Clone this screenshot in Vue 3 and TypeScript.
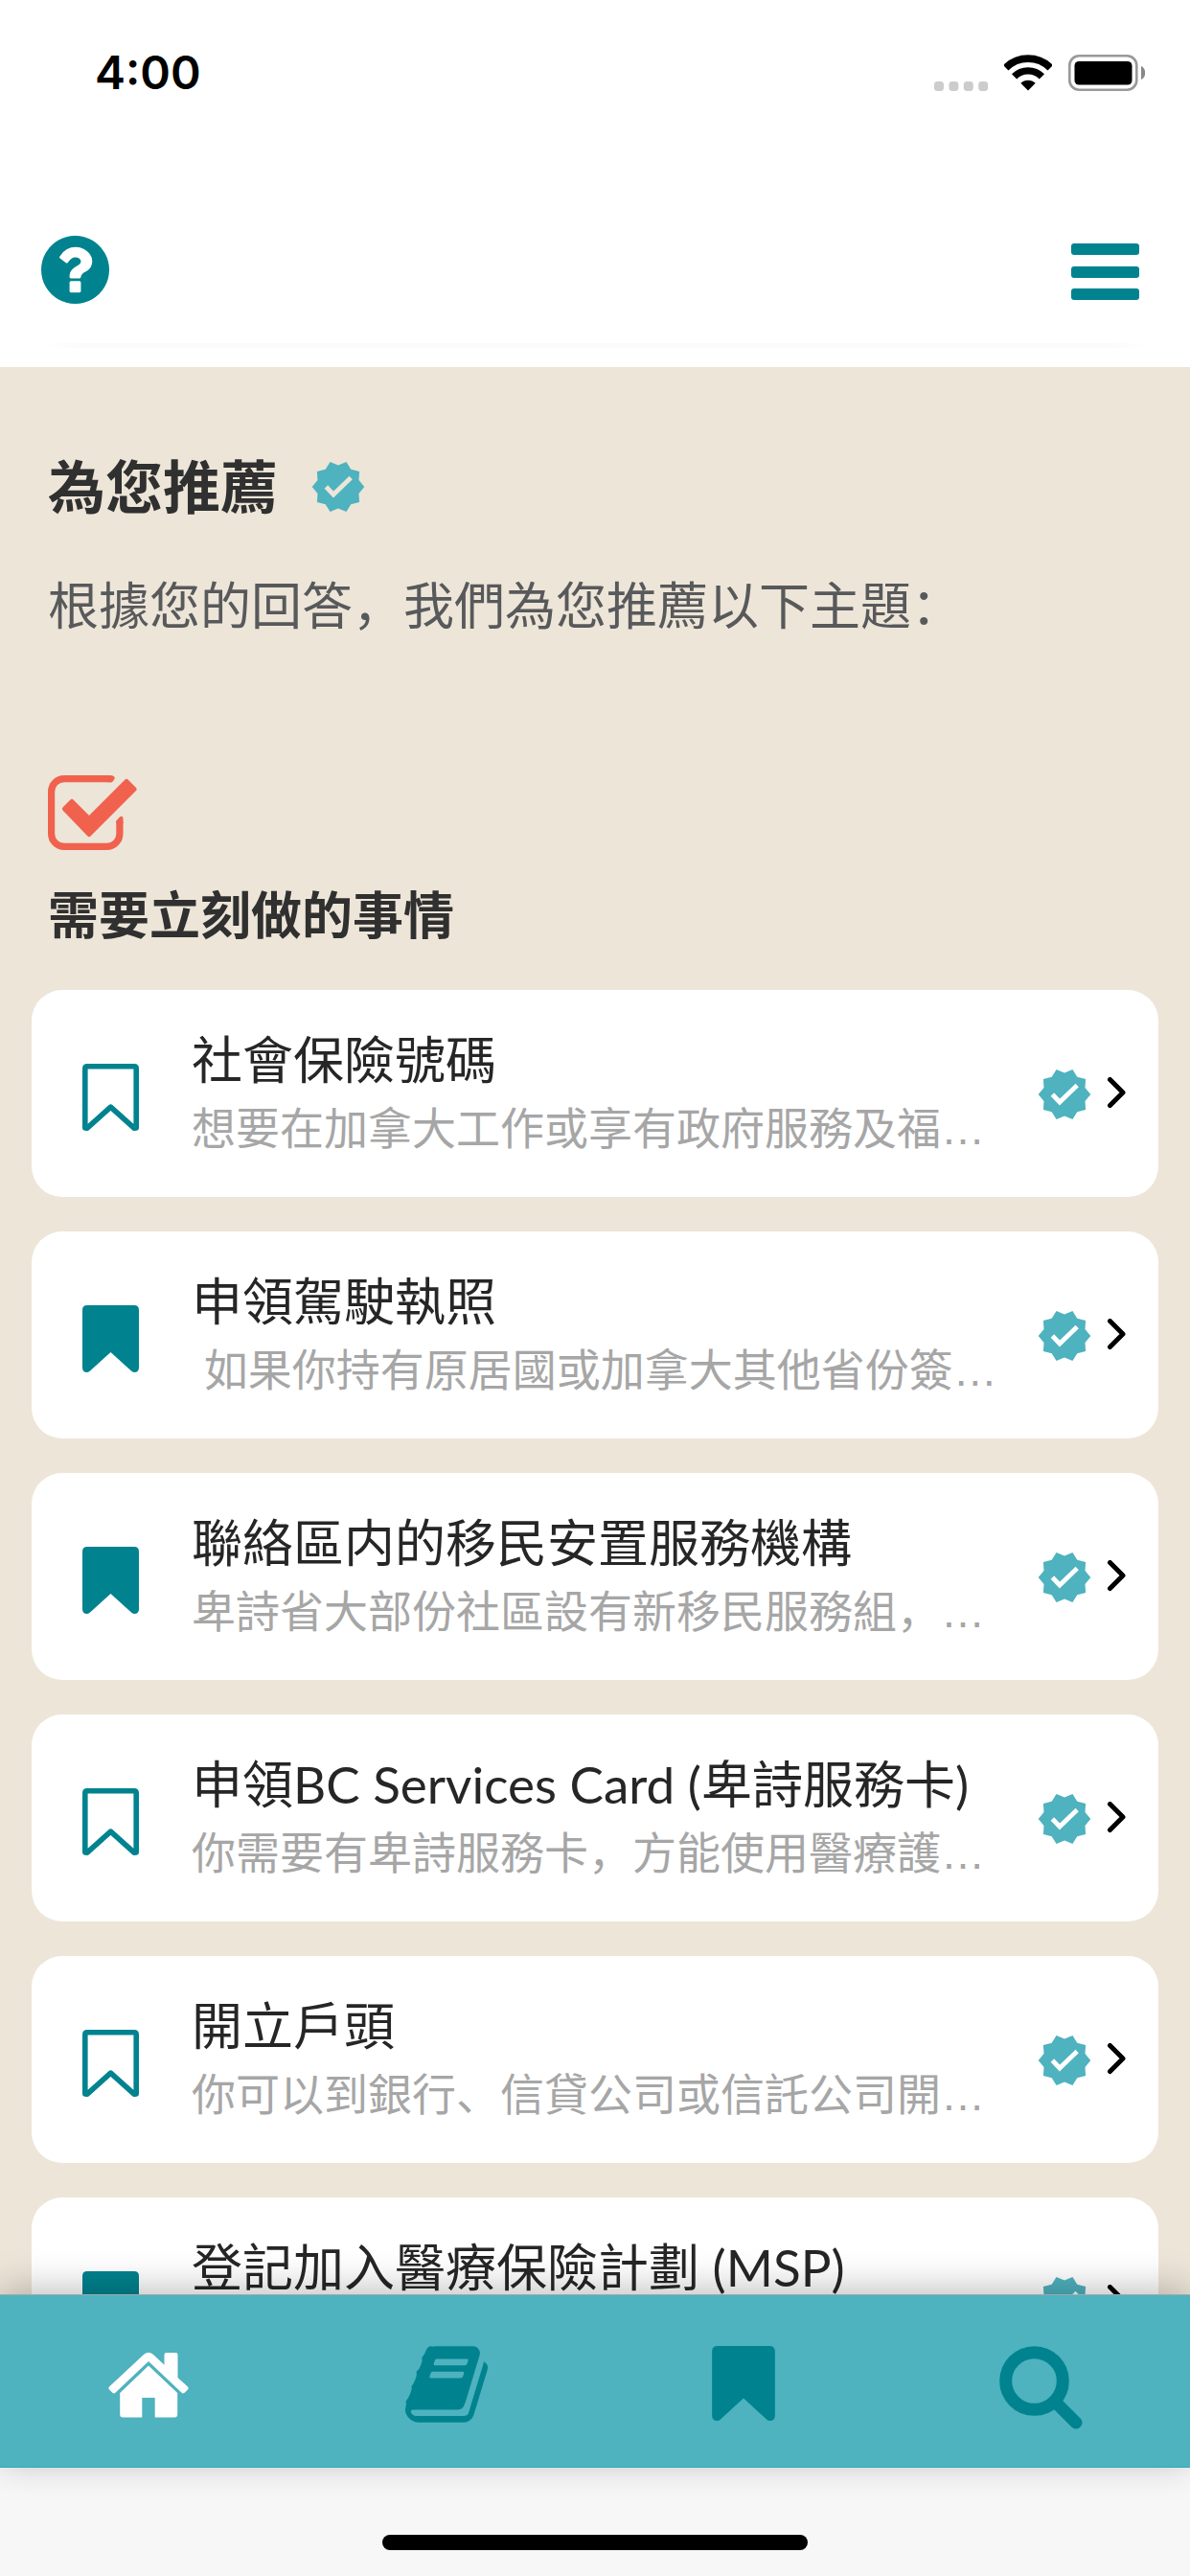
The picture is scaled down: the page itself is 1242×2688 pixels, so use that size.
<script setup lang="ts">
import { ref } from 'vue'

interface Topic {
  id: number
  title: string
  summary: string
  saved: boolean
}

const topics = ref<Topic[]>([
  { id: 1, title: '社會保險號碼', summary: '想要在加拿大工作或享有政府服務及福…', saved: false },
  { id: 2, title: '申領駕駛執照', summary: '\u00a0如果你持有原居國或加拿大其他省份簽…', saved: true },
  { id: 3, title: '聯絡區内的移民安置服務機構', summary: '卑詩省大部份社區設有新移民服務組，…', saved: true },
  { id: 4, title: '申領BC Services Card (卑詩服務卡)', summary: '你需要有卑詩服務卡，方能使用醫療護…', saved: false },
  { id: 5, title: '開立戶頭', summary: '你可以到銀行、信貸公司或信託公司開…', saved: false },
  { id: 6, title: '登記加入醫療保險計劃 (MSP)', summary: '', saved: true },
])

// Ten-pointed seal, alternating tips and valleys around (28, 28).
const seal = Array.from({ length: 20 }, (_, i) => {
  const radius = i % 2 === 0 ? 27.3 : 22.6
  const angle = (i * Math.PI) / 10
  return `${(28 + radius * Math.cos(angle)).toFixed(2)},${(28 + radius * Math.sin(angle)).toFixed(2)}`
}).join(' ')
</script>

<template>
  <div class="app" lang="zh-CN">
    <div class="status">
      <span class="time">4:00</span>
      <div class="indicators">
        <svg class="dots" viewBox="0 0 56 10" aria-hidden="true">
          <rect v-for="n in 4" :key="n" :x="(n - 1) * 15.4" width="10" height="10" rx="3.4" />
        </svg>
        <svg class="wifi" viewBox="0 0 50 38" aria-hidden="true">
          <path d="M1.7 13.7a33 33 0 0 1 46.6 0" stroke-width="7.8" />
          <path d="M10.6 22.8a20.4 20.4 0 0 1 28.8 0" stroke-width="7.4" />
          <path class="solid" d="M25 37.5 17.3 29.8a11 11 0 0 1 15.4 0z" />
        </svg>
        <svg class="battery" viewBox="0 0 80 38" aria-hidden="true">
          <rect x="1.3" y="1.3" width="70" height="35.4" rx="10" fill="none" stroke="#999" stroke-width="2.6" />
          <rect x="6.5" y="7" width="60" height="24.5" rx="4.6" />
          <path d="M76 12c5.600 2 5.600 12 0 14z" fill="#888" />
        </svg>
      </div>
    </div>

    <header class="header">
      <button type="button" aria-label="說明">
        <svg class="help" viewBox="128 128 1536 1536" aria-hidden="true">
          <path d="M1024 1376v-192q0-14-9-23t-23-9h-192q-14 0-23 9t-9 23v192q0 14 9 23t23 9h192q14 0 23-9t9-23zm256-672q0-88-55.500-163t-138.500-116-170-41q-243 0-371 213-15 24 8 42l132 100q7 6 19 6 16 0 25-12 53-68 86-92 34-24 86-24 48 0 85.500 26t37.500 59q0 38-20 61t-68 45q-63 28-115.500 86.500t-52.500 125.500v36q0 14 9 23t23 9h192q14 0 23-9t9-23q0-19 21.500-49.500t54.500-49.500q32-18 49-28.500t46-35 44.500-48 28-60.500 12.500-81zm384 192q0 209-103 385.500t-279.500 279.500-385.500 103-385.500-103-279.500-279.500-103-385.500 103-385.500 279.500-279.500 385.500-103 385.500 103 279.500 279.500 103 385.500z" />
        </svg>
      </button>
      <button type="button" aria-label="選單">
        <svg class="menu" viewBox="0 -4 71 64" aria-hidden="true">
          <rect width="71" height="12" rx="3" />
          <rect y="24" width="71" height="12" rx="3" />
          <rect y="47" width="71" height="12" rx="3" />
        </svg>
      </button>
    </header>

    <main class="content">
      <div class="intro">
        <h1>
          為您推薦
          <svg class="badge cut" viewBox="0 0 56 56" aria-hidden="true">
            <polygon :points="seal" />
            <polyline points="15.400,28 23,36 41.200,18.600" />
          </svg>
        </h1>
        <p>根據您的回答，我們為您推薦以下主題：</p>
      </div>

      <section>
        <div class="section-head">
          <svg class="task" viewBox="0 0 93 78" aria-hidden="true">
            <path class="box" d="M66 3.600H17A13.400 13.400 0 0 0 3.600 17V61A13.400 13.400 0 0 0 17 74.400H61.500A13.400 13.400 0 0 0 74.900 61V48" />
            <path d="M64 0Q71 0 69.500 4L67 7.200H62V0zM71.300 50V47.500L75 43.500Q78.500 41 78.500 46V50z" />
            <path class="tick" d="M17.500 35 25 27.500 43 45.500 82 6.500 90 14.500 43 61.500z" />
          </svg>
          <h2>需要立刻做的事情</h2>
        </div>

        <ul class="cards">
          <li v-for="topic in topics" :key="topic.id" class="card">
            <button
              type="button"
              class="save"
              :aria-pressed="topic.saved"
              aria-label="收藏"
              @click="topic.saved = !topic.saved"
            >
              <svg class="bookmark" viewBox="0 0 59 70" aria-hidden="true">
                <path v-if="topic.saved" d="M5 0H54Q59 0 59 5V65Q59 70 54 70 52.500 70 51 68.600L29.500 49 8 68.600Q6.500 70 5 70 0 70 0 65V5Q0 0 5 0z" />
                <path v-else class="outline" d="M5 2.800H54Q56.200 2.800 56.200 5V67L54 67.200 29.500 45.200 5 67.200 2.800 67V5Q2.800 2.800 5 2.800z" />
              </svg>
            </button>
            <a href="#" class="topic">
              <span class="text">
                <span class="title">{{ topic.title }}</span>
                <span class="summary">{{ topic.summary }}</span>
              </span>
              <svg class="badge" viewBox="0 0 56 56" aria-hidden="true">
                <polygon :points="seal" />
                <polyline points="15.400,28 23,36 41.200,18.600" />
              </svg>
              <svg class="chevron" viewBox="0 1 20 36" aria-hidden="true">
                <path d="M3.500 3.500 17 17 3.500 30.500" />
              </svg>
            </a>
          </li>
        </ul>
      </section>
    </main>

    <nav class="tabs">
      <a href="#" class="active" aria-label="首頁" aria-current="page">
        <svg width="84" height="88" viewBox="0 0 84 88" aria-hidden="true">
          <path d="M37.500 8.500Q42 5 46.500 8.500L58.500 19.800V9Q58.500 7 60.500 7H70.500Q72.500 7 72.500 9V33L83 42.500Q84.300 44 83 45.400L79.600 48.800Q78 50 76.600 48.800L42 16 7.400 48.800Q6 50 4.400 48.800L1 45.400Q-.3 44 1 42.500z" />
          <path d="M42 20.600 72.200 49V71.500Q72.200 74.500 69.200 74.500H48.700V54H35.300V74.500H15.200Q12.200 74.500 12.200 71.500V49z" />
        </svg>
      </a>
      <a href="#" aria-label="主題">
        <svg width="86" height="80" viewBox="64 128 1664 1536" aria-hidden="true">
          <path d="M1703 478q40 57 18 129l-275 906q-19 64-76.500 107.500t-122.500 43.500h-923q-77 0-148.500-53.500t-99.500-131.500q-24-67-2-127 0-4 3-27t4-37q1-8-3-21.500t-3-19.500q2-11 8-21t16.500-23.500 16.500-23.500q23-38 45-91.500t30-91.500q3-10 .5-30t-.5-28q3-11 17-28t17-23q21-36 42-92t25-90q1-9-2.500-32t.5-28q4-13 22-30.500t22-22.500q19-26 42.500-84.500t27.500-96.500q1-8-3-25.500t-2-26.500q2-8 9-18t18-23 17-21q8-12 16.500-30.500t15-35 16-36 19.500-32 26.500-23.500 36-11.500 47.500 5.500l-1 3q38-9 51-9h761q74 0 114 56t18 130l-274 906q-36 119-71.500 153.500t-128.500 34.500h-869q-27 0-38 15-11 16-1 43 24 70 144 70h923q29 0 56-15.500t35-41.500l300-987q7-22 5-57 38 15 59 43zm-1064 2q-4 13 2 22.500t20 9.500h608q13 0 25.500-9.500t16.500-22.500l21-64q4-13-2-22.500t-20-9.500h-608q-13 0-25.500 9.500t-16.500 22.500zm-83 256q-4 13 2 22.500t20 9.500h608q13 0 25.500-9.500t16.500-22.500l21-64q4-13-2-22.500t-20-9.500h-608q-13 0-25.500 9.500t-16.500 22.500z" />
        </svg>
      </a>
      <a href="#" aria-label="書籤">
        <svg width="66" height="78" viewBox="0 0 59 70" aria-hidden="true">
          <path d="M5 0H54Q59 0 59 5V65Q59 70 54 70 52.500 70 51 68.600L29.500 49 8 68.600Q6.500 70 5 70 0 70 0 65V5Q0 0 5 0z" />
        </svg>
      </a>
      <a href="#" aria-label="搜尋">
        <svg width="87" height="87" viewBox="0 0 87 87" aria-hidden="true">
          <circle cx="36.500" cy="36.500" r="29.800" />
          <path class="handle" d="M60 60 80 80" />
        </svg>
      </a>
    </nav>
    <div class="home-area"><span class="home-indicator"></span></div>
  </div>
</template>

<style>
body {
  margin: 0;
}
</style>

<style scoped>
.app {
  --teal: #00838f;
  --aqua: #4eb2bf;
  --sand: #ede5d8;
  display: flex;
  flex-direction: column;
  height: 100vh;
  overflow: hidden;
  background: #fff;
  font-family: Lato, 'Noto Sans CJK SC', sans-serif;
}

svg {
  display: block;
  flex: none;
  fill: currentColor;
}

button {
  flex: none;
  padding: 0;
  border: 0;
  background: none;
  color: var(--teal);
  cursor: pointer;
}

a {
  color: inherit;
  text-decoration: none;
}

.status {
  display: flex;
  flex: none;
  align-items: center;
  justify-content: space-between;
  height: 152px;
  padding: 0 47px 0 99px;
  color: #000;
}

.time {
  font-family: Inter, sans-serif;
  font-size: 48px;
  font-weight: 600;
  line-height: 60px;
}

.indicators {
  display: flex;
  align-items: flex-end;
  gap: 17px;
}

.dots {
  width: 56px;
  height: 10px;
  color: #ccc;
}

.wifi {
  width: 50px;
  height: 38px;
  fill: none;
  stroke: currentColor;
}

.wifi .solid {
  fill: currentColor;
  stroke: none;
}

.battery {
  width: 80px;
  height: 38px;
}

.header {
  display: flex;
  flex: none;
  align-items: center;
  justify-content: space-between;
  padding: 94px 53px 66px 43px;
  background: linear-gradient(90deg, transparent, #fbfbfb 4%, #fbfbfb 96%, transparent) 50% 206px / 1160px 5px no-repeat;
}

.help {
  width: 71px;
  height: 71px;
}

.menu {
  width: 71px;
  height: 64px;
}

.content {
  flex: 1;
  min-height: 0;
  padding: 95px 33px 0;
  overflow: hidden;
  background: var(--sand);
}

h1,
h2,
p {
  margin: 0;
}

.intro,
.section-head {
  padding: 0 17px;
}

h1 {
  display: flex;
  align-items: center;
  gap: 35px;
  color: #303030;
  font-size: 60px;
  font-weight: 700;
  line-height: 60px;
}

.intro p {
  margin-top: 62px;
  color: #58595b;
  font-size: 53px;
  line-height: 64px;
}

.section-head {
  margin-top: 145px;
}

.task {
  width: 93px;
  height: 78px;
  color: #f0624d;
}

.task .box {
  fill: none;
  stroke: currentColor;
  stroke-width: 7.2;
}

.task .tick {
  stroke: currentColor;
  stroke-width: 5;
  stroke-linejoin: round;
}

h2 {
  margin-top: 36px;
  color: #303030;
  font-size: 53px;
  font-weight: 700;
  line-height: 64px;
}

.cards {
  display: flex;
  flex-direction: column;
  gap: 36px;
  margin: 46px 0 0;
  padding: 0;
  list-style: none;
}

.card {
  display: flex;
  align-items: center;
  gap: 55px;
  padding: 45px 34px 43px 53px;
  border-radius: 32px;
  background: #fff;
}

.save {
  padding-top: 6px;
}

.bookmark {
  width: 59px;
  height: 70px;
}

.bookmark .outline {
  fill: none;
  stroke: currentColor;
  stroke-width: 5.6;
  stroke-linejoin: round;
}

.topic {
  display: flex;
  flex: 1;
  align-items: center;
  gap: 16px;
  min-width: 0;
}

.text {
  display: flex;
  flex: 1;
  flex-direction: column;
  gap: 16px;
  min-width: 0;
  white-space: nowrap;
}

.title,
.summary {
  height: 56px;
  line-height: 56px;
}

.title {
  color: #262626;
  font-size: 53px;
}

.summary {
  color: #a6a6a6;
  font-family: 'Liberation Sans', 'Noto Sans CJK SC', sans-serif;
  font-size: 46px;
}

.badge {
  width: 56px;
  height: 56px;
  color: var(--aqua);
}

.badge polyline {
  fill: none;
  stroke: #fff;
  stroke-width: 4.8;
}

.badge.cut polyline {
  stroke: var(--sand);
}

.chevron {
  width: 20px;
  height: 36px;
  fill: none;
  stroke: #000;
  stroke-width: 5;
  stroke-linecap: round;
  stroke-linejoin: round;
}

.tabs {
  position: relative;
  display: flex;
  flex: none;
  border-top: 1px solid #a0a9aa;
  border-bottom: 1px solid #2aabb8;
  background: var(--aqua);
  box-shadow: 0 -6px 36px rgba(0, 0, 0, 0.25);
  color: var(--teal);
}

.tabs a {
  display: flex;
  flex: 1;
  align-items: flex-start;
  justify-content: center;
  height: 126px;
  padding-top: 53px;
}

.tabs .active {
  color: #fff;
}

.tabs circle,
.tabs .handle {
  fill: none;
  stroke: currentColor;
  stroke-width: 13;
  stroke-linecap: round;
}

.home-area {
  display: flex;
  flex: none;
  justify-content: center;
  padding: 70px 0 27px;
  background: #f7f7f7;
}

.home-indicator {
  width: 444px;
  height: 16px;
  border-radius: 8px;
  background: #000;
}
</style>
